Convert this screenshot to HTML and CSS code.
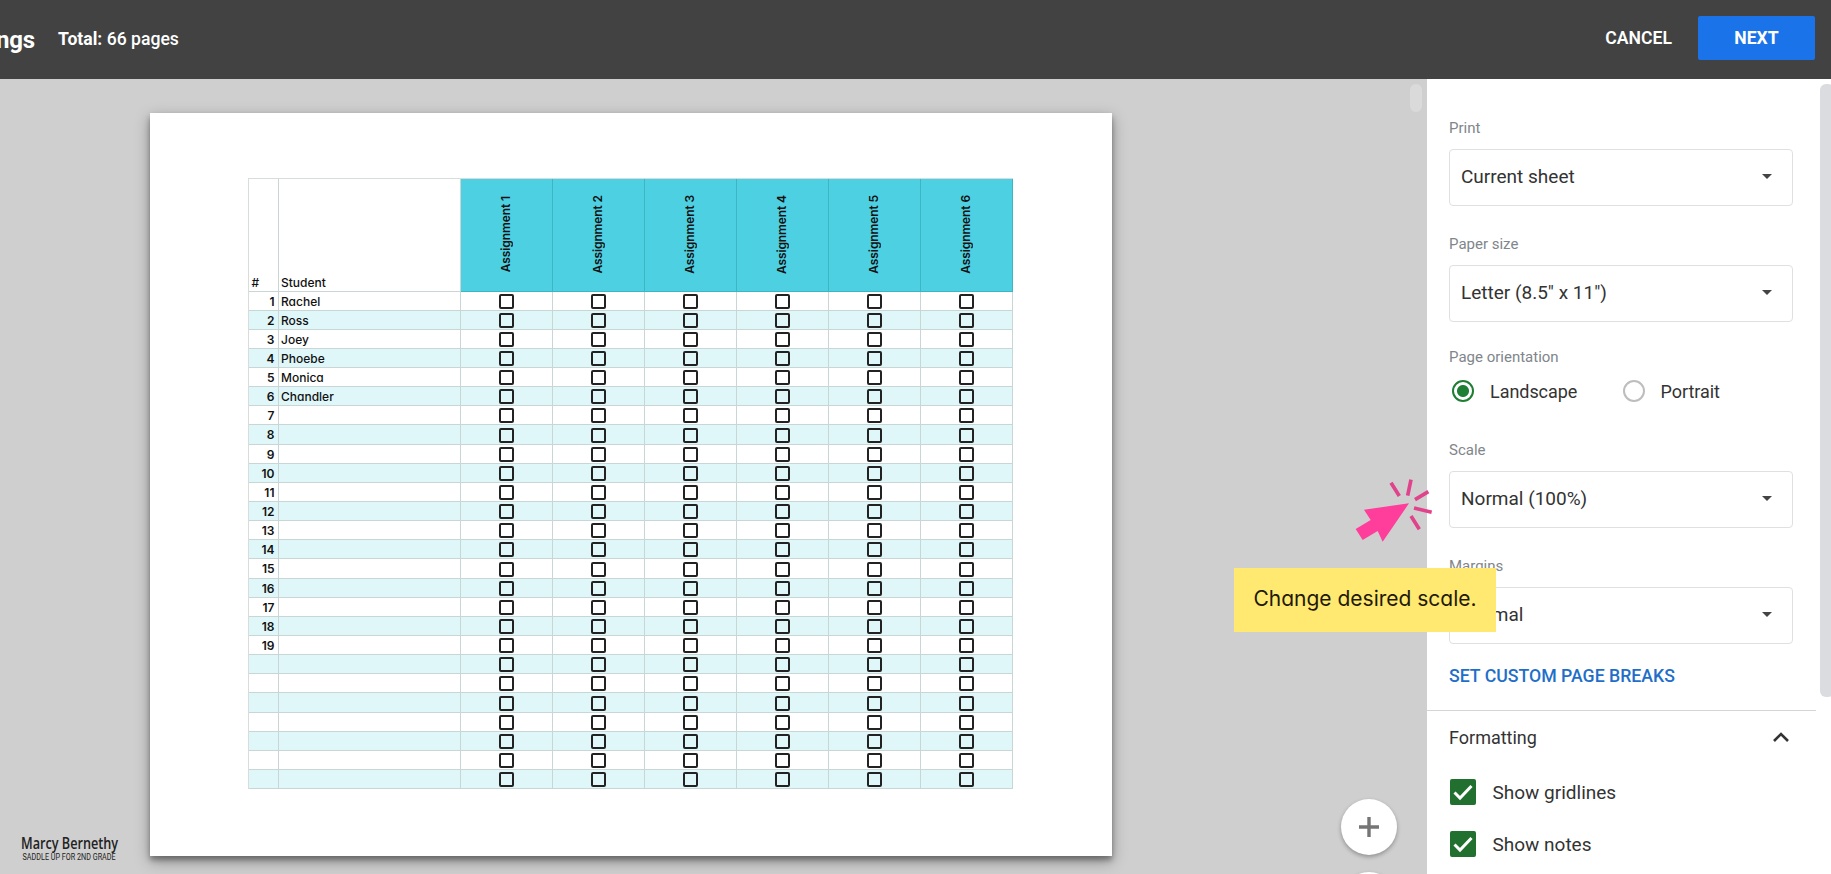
FILE: index.html
```html
<!DOCTYPE html>
<html lang="en">

<head>
  <meta charset="UTF-8">
  <meta name="viewport" content="width=device-width, initial-scale=1.0">
  <title>Print settings</title>
  <link rel="stylesheet" href="styles.css">
</head>

<body>

  <header class="topbar">
    <h1 class="topbar__title">ngs</h1>
    <p class="topbar__total"><b>Total:</b> 66 pages</p>
    <button class="topbar__cancel" type="button">CANCEL</button>
    <button class="topbar__next" type="button">NEXT</button>
  </header>

  <div class="layout">
    <main class="preview">
      <div class="sheet">
        <div class="grid" id="grid"></div>
      </div>
      <div class="preview__scroll"></div>
      <div class="logo">
        <span class="logo__name">Marcy Bernethy</span>
        <span class="logo__tag">SADDLE UP FOR 2ND GRADE</span>
      </div>
      <button class="zoom zoom--in" type="button" aria-label="Zoom in">
        <svg width="22" height="22" viewBox="0 0 22 22">
          <path d="M11 1v20M1 11h20" stroke="#757575" stroke-width="3.4" />
        </svg>
      </button>
      <button class="zoom zoom--out" type="button" aria-label="Zoom out"></button>
    </main>

    <aside class="settings">
      <div class="settings__general">
        <div class="field">
          <span class="field__label">Print</span>
          <div class="select">Current sheet<i class="select__arrow"></i></div>
        </div>
        <div class="field">
          <span class="field__label">Paper size</span>
          <div class="select">Letter (8.5" x 11")<i class="select__arrow"></i></div>
        </div>
        <div class="field field--radio">
          <span class="field__label">Page orientation</span>
          <div class="radios">
            <label class="radio"><i class="radio__dot radio__dot--on"></i>Landscape</label>
            <label class="radio"><i class="radio__dot"></i>Portrait</label>
          </div>
        </div>
        <div class="field">
          <span class="field__label">Scale</span>
          <div class="select">Normal (100%)<i class="select__arrow"></i></div>
        </div>
        <div class="field field--last">
          <span class="field__label">Margins</span>
          <div class="select">Normal<i class="select__arrow"></i></div>
        </div>
        <a class="settings__breaks" href="#">SET CUSTOM PAGE BREAKS</a>
      </div>

      <div class="settings__formatting">
        <div class="settings__heading">
          Formatting
          <svg width="18" height="12" viewBox="0 0 18 12">
            <path d="M2 10l7-7 7 7" fill="none" stroke="#333" stroke-width="2.6" />
          </svg>
        </div>
        <label class="check">
          <svg class="check__box" width="26" height="26" viewBox="0 0 26 26">
            <rect width="26" height="26" rx="2" fill="#21702f" />
            <path d="M4.5 13.5l5.5 5.5L21.5 7" fill="none" stroke="#fff" stroke-width="3" />
          </svg>
          Show gridlines
        </label>
        <label class="check">
          <svg class="check__box" width="26" height="26" viewBox="0 0 26 26">
            <rect width="26" height="26" rx="2" fill="#21702f" />
            <path d="M4.5 13.5l5.5 5.5L21.5 7" fill="none" stroke="#fff" stroke-width="3" />
          </svg>
          Show notes
        </label>
      </div>
      <div class="settings__scroll"></div>
    </aside>
  </div>

  <svg class="pointer" width="100" height="90" viewBox="0 0 300 270">
    <path d="M207 130L72 149l20 31-45 27 21 33 45-27 15 32z" fill="#ff3d9a" />
    <path d="M153 68l25 40M213 59l-10 48M265 95l-40 24M222 144l53 13M213 168l25 40" stroke="#e0438c" stroke-width="11" />
  </svg>
  <div class="note">Change desired scale.</div>

  <script>
    const grid = document.getElementById('grid');
    const students = ['Rachel', 'Ross', 'Joey', 'Phoebe', 'Monica', 'Chandler'];
    const numbered = 19;
    const rows = 26;
    const assignments = 6;

    const addCell = (className, text = '') => {
      const cell = document.createElement('div');
      cell.className = `cell ${className}`;
      cell.textContent = text;
      grid.append(cell);
      return cell;
    };

    addCell('cell--head', '#');
    addCell('cell--head', 'Student');
    for (let i = 1; i <= assignments; i++) {
      const head = addCell('cell--assignment');
      const name = document.createElement('span');
      name.textContent = `Assignment ${i}`;
      head.append(name);
    }

    for (let row = 1; row <= rows; row++) {
      const band = row % 2 ? '' : ' cell--band';
      addCell('cell--number' + band, row <= numbered ? row : '');
      addCell('cell--name' + band, students[row - 1] || '');
      for (let i = 0; i < assignments; i++) {
        const box = document.createElement('i');
        box.className = 'box';
        addCell('cell--box' + band).append(box);
      }
    }
  </script>
</body>

</html>
```

FILE: styles.css
```css
*,
*:after,
*:before {
  box-sizing: border-box;
  margin: 0;
  padding: 0;
}

body {
  position: relative;
  display: flex;
  flex-direction: column;
  height: 100vh;
  overflow: hidden;
  font-family: Roboto, sans-serif;
  color: #333;
}

button {
  border: 0;
  font: inherit;
}

.topbar {
  display: flex;
  flex: none;
  align-items: center;
  height: 79px;
  padding: 0 16px 3px 0;
  background: #424242;
  color: #fff;
  font-size: 18px;
}

.topbar__title {
  display: flex;
  justify-content: flex-end;
  width: 35px;
  margin-right: 23px;
  font-size: 24px;
  font-weight: 700;
  line-height: 28px;
  letter-spacing: -.2px;
  padding-top: 3px;
}

.topbar__total {
  padding-top: 2px;
  font-weight: 500;
  font-size: 17.6px;
  line-height: 24px;
}

.topbar__total b {
  font-weight: 700;
}

.topbar__cancel {
  margin-left: auto;
  background: none;
  color: #fff;
  font-weight: 600;
  font-size: 17.6px;
  line-height: 22px;
}

.topbar__next {
  width: 117px;
  height: 44px;
  margin-left: 26px;
  border-radius: 2px;
  background: #1a73e8;
  color: #fff;
  font-weight: 700;
  font-size: 17.6px;
}

.layout {
  display: flex;
  flex: 1;
  min-height: 0;
}

.preview {
  position: relative;
  flex: 1;
  overflow: hidden;
  padding: 34px 0 0 149.5px;
  background: #cfcfcf;
}

.sheet {
  width: 962px;
  height: 743px;
  padding: 64.5px 0 0 98.5px;
  background: #fff;
  box-shadow: 0 4px 5px rgba(0, 0, 0, .3), 0 5px 14px rgba(0, 0, 0, .35);
}

.grid {
  display: grid;
  grid-template-columns: 29.5px 182px repeat(6, 92px);
  grid-template-rows: 113px repeat(26, 19.15px);
  width: 765px;
  border: 1px solid #d8dcdc;
  border-width: 1px 0 0 1px;
  font: 500 12px/20px Inter, sans-serif;
  font-feature-settings: "cv11";
  color: #111;
}

.cell {
  border: 1px solid #c9d6d6;
  border-width: 0 1px 1px 0;
}

.cell--head {
  display: flex;
  align-items: flex-end;
  padding-left: 2.5px;
  line-height: 17px;
}

.cell--assignment {
  display: flex;
  align-items: center;
  justify-content: center;
  border-color: #3fb4c2;
  background: #4dd0e1;
  font-weight: 600;
  letter-spacing: -.1px;
}

.cell--assignment span {
  writing-mode: vertical-rl;
  transform: rotate(180deg);
}

.cell--number {
  padding-right: 3px;
  text-align: right;
  font-weight: 600;
}

.cell--name {
  padding-left: 2.5px;
}

.cell--box {
  display: flex;
  align-items: center;
  justify-content: center;
  padding-top: 1px;
}

.cell--band {
  background: #e0f7fa;
}

.box {
  width: 15px;
  height: 15px;
  border: 2px solid #222;
  border-radius: 2px;
}

.preview__scroll {
  position: absolute;
  top: 5px;
  right: 5px;
  width: 12px;
  height: 28px;
  border-radius: 6px;
  background: #dadada;
}

.logo {
  position: absolute;
  left: 21px;
  bottom: 13px;
  display: flex;
  flex-direction: column;
  color: #222;
  white-space: nowrap;
}

.logo__name {
  font: 600 17px/19px "Open Sans", sans-serif;
  transform: scaleX(.745);
  transform-origin: 0 0;
}

.logo__tag {
  font: 9.5px/9px Roboto, sans-serif;
  transform: scaleX(.76);
  transform-origin: 0 0;
  padding-left: 2px;
}

.zoom {
  position: absolute;
  left: 1341px;
  display: flex;
  align-items: center;
  justify-content: center;
  width: 56px;
  height: 56px;
  border-radius: 50%;
  background: #fff;
  box-shadow: 0 2px 4px rgba(0, 0, 0, .3);
}

.zoom--in {
  top: 719.5px;
}

.zoom--out {
  top: 793px;
}

.settings {
  position: relative;
  width: 404px;
  background: #fff;
}

.settings__general {
  width: 389px;
  height: 632px;
  padding: 39px 23px 0 22px;
  border-bottom: 1px solid #d5d5d5;
}

.field {
  height: 115.5px;
}

.field--radio {
  height: 93px;
  margin-top: -2px;
}

.field--last {
  height: 110px;
}

.field__label {
  display: block;
  height: 31px;
  color: #80868b;
  font-size: 15px;
  line-height: 20px;
}

.select {
  display: flex;
  align-items: center;
  justify-content: space-between;
  width: 344px;
  height: 57px;
  padding: 0 20px 2px 11px;
  border: 1px solid #e0e0e0;
  border-radius: 4px;
  font-size: 19px;
}

.select__arrow {
  border: 5.5px solid transparent;
  border-top-color: #444;
  border-bottom: 0;
}

.radios {
  display: flex;
  padding: 2px 0 0 3px;
}

.radio {
  display: flex;
  align-items: center;
  width: 172.5px;
  font-size: 18px;
  letter-spacing: -.05px;
}

.radio__dot {
  width: 22px;
  height: 22px;
  margin-right: 16px;
  border: 2px solid #bdbdbd;
  border-radius: 50%;
}

.radio__dot--on {
  border-color: #1e7e34;
  background: radial-gradient(circle, #1e7e34 5.5px, transparent 6.5px);
}

.settings__breaks {
  color: #1f6fc9;
  font-size: 17.7px;
  font-weight: 500;
  line-height: 20px;
  text-decoration: none;
}

.settings__formatting {
  padding: 16px 41px 0 22px;
}

.settings__heading {
  display: flex;
  align-items: center;
  justify-content: space-between;
  height: 20px;
  margin-bottom: 32px;
  font-size: 18px;
}

.check {
  display: flex;
  align-items: center;
  height: 26px;
  margin-bottom: 26px;
  font-size: 19px;
}

.check__box {
  margin: 0 17px 0 .5px;
}

.settings__scroll {
  position: absolute;
  top: 5px;
  right: -3px;
  width: 14px;
  height: 613px;
  border-radius: 6px;
  background: #dadce0;
}

.pointer {
  position: absolute;
  left: 1340px;
  top: 460px;
}

.note {
  position: absolute;
  left: 1234px;
  top: 568px;
  width: 262px;
  height: 63.5px;
  background: #ffe970;
  color: #1f1a08;
  font: 400 21px/61px Inter, sans-serif;
  font-feature-settings: "cv11";
  text-align: center;
  white-space: nowrap;
}
```
